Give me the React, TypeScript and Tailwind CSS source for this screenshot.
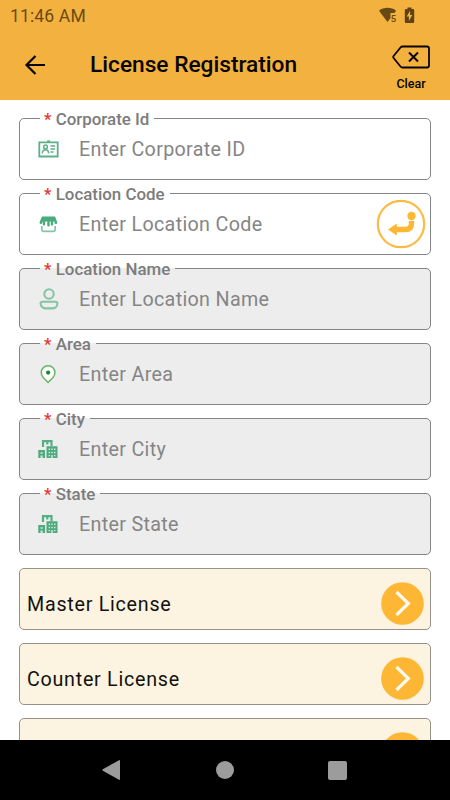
import { type ReactNode } from "react";
import clsx from "clsx";

const IdCardIcon = () => (
  <svg width="22" height="20" viewBox="0 0 22 20" fill="none" stroke="#5fb088" strokeWidth="1.8">
    <path d="M1.3 3.3h18.4v14.2H1.300z" />
    <path d="M9.200 2.200h2.800" />
    <circle cx="7.500" cy="8" r="1.9" strokeWidth="1.5" />
    <path d="M4.300 14.400c.2-2.400 1.400-3.600 3.200-3.600s3 1.200 3.200 3.600" strokeWidth="1.6" />
    <path d="M12.500 7h4.600M12.500 10h4.600M12.500 13h3" strokeWidth="1.500" />
  </svg>
);

const StoreIcon = () => (
  <svg width="22" height="20" viewBox="0 0 22 20" fill="none">
    <path d="M4 2.600h13l2.200 5.300v.8c0 .8-.6 1.300-1.400 1.300s-1.400-.6-1.400-1.400V7.400h-1.200v2.800c0 .8-.5 1.300-1.200 1.300s-1.200-.5-1.200-1.300V7.400h-1.100v3.800c0 .8-.5 1.300-1.200 1.300s-1.200-.5-1.200-1.300V7.400H7.200v2.800c0 .8-.5 1.300-1.200 1.300s-1.200-.5-1.200-1.300V7.400h-.4v1.200c0 .8-.6 1.400-1.400 1.400s-1.400-.5-1.400-1.300v-.8z" fill="#4aab7b" />
    <path d="M3.800 12v3.800c0 .9.500 1.500 1.500 1.500h10.400c1 0 1.500-.6 1.500-1.500V12" stroke="#83c5a4" strokeWidth="1.700" />
  </svg>
);

const PersonIcon = () => (
  <svg width="22" height="22" viewBox="0 0 22 22" fill="none" stroke="#85c4a4" strokeWidth="2.100">
    <circle cx="11" cy="6" r="4.700" />
    <path d="M4.600 13.800h12.800c1.200 0 2 .7 2 1.700 0 3.100-2.600 4.900-5.400 4.900H8c-2.800 0-5.400-1.800-5.400-4.900 0-1 .8-1.700 2-1.700z" />
  </svg>
);

const PinIcon = () => (
  <svg width="22" height="20" viewBox="0 0 22 20">
    <path d="M10.100 18.500 5.200 13.400C2.300 10.200 3 6 5 3.900c2.800-2.900 7.400-2.900 10.200 0 2 2.100 2.700 6.300-.2 9.500z" fill="#fff" stroke="#66b565" strokeWidth="1.500" />
    <circle cx="10.100" cy="8.600" r="2.100" fill="#168a2c" />
  </svg>
);

const BuildingsIcon = () => (
  <svg width="22" height="20" viewBox="0 0 22 20" fill="none">
    <path d="M5 8V2.200h8.500V7" stroke="#58ae83" strokeWidth="2.200" />
    <path d="M9.300 2.500v3" stroke="#58ae83" strokeWidth="2.200" />
    <path d="M.3 11H7v8H.3zM8.500 7.200h11V19h-11z" fill="#4eaa7d" />
    <path d="M2.500 13.200h2.200v1.500H2.500zM2.500 16.600h2.200V19H2.500zM10.600 9.500h1.500V11h-1.500zM13.300 9.500h1.500V11h-1.500zM16 9.500h1.500V11H16zM10.600 12.800h1.500v1.500h-1.500zM13.300 12.800h1.500v1.500h-1.500zM16 12.800h1.500v1.500H16zM10.600 16h1.500v1.300h-1.500zM13.300 16h1.500v3h-1.500zM16 16h1.500v1.300H16z" fill="#cfe5da" />
  </svg>
);

const EnterButton = () => (
  <button aria-label="Look up location code">
    <svg width="50" height="50" viewBox="0 0 50 50" fill="none">
      <circle cx="25" cy="25" r="23.200" stroke="#fdbb45" strokeWidth="2.200" />
      <circle cx="35.500" cy="17" r="4.200" fill="#fdb735" />
      <path d="M35.500 22v2.500q0 6-6 6H19" stroke="#fdb735" strokeWidth="5.400" />
      <path d="M12 30.500 20.800 24.500v12z" fill="#fdb735" />
    </svg>
  </button>
);

interface FieldProps {
  label: string;
  placeholder: string;
  icon: ReactNode;
  disabled?: boolean;
  action?: ReactNode;
}

function Field({ label, placeholder, icon, disabled, action }: FieldProps) {
  return (
    <fieldset className={clsx("h-[62px] min-w-0 rounded-[5px] border border-[#858585] pl-5", disabled && "bg-[#ededed]")}>
      <legend className="h-px whitespace-nowrap pl-1 pr-[5px] text-[16.900px] font-medium leading-[3px] text-[#7c7c7c]">
        <span className="text-[#e5352d]">*</span> {label}
      </legend>
      <div className="flex h-[60px] items-center">
        <div className="-ml-0.5 flex w-[41px] shrink-0">{icon}</div>
        <input
          className="h-10 min-w-0 flex-1 bg-transparent text-[19.700px] tracking-[0.330px] outline-none placeholder:text-[#858585]"
          placeholder={placeholder}
          disabled={disabled}
        />
        {action && <div className="mr-1 flex">{action}</div>}
      </div>
    </fieldset>
  );
}

function LicenseRow({ title }: { title: string }) {
  return (
    <button className="flex h-[62px] w-full shrink-0 items-center justify-between rounded-[5px] border border-[#96928b] bg-[#fcf3e0] pl-[7px] pr-[6px] pt-[9px] text-left text-[19.700px] tracking-[0.740px] text-[#111]">
      <span className="block pt-0.5">{title}</span>
      <svg width="43" height="43" viewBox="0 0 43 43" fill="none">
        <circle cx="21.500" cy="21.500" r="21.300" fill="#fdb735" />
        <path d="M15.500 10 27.300 21.500 15.500 33" stroke="#fffaf0" strokeWidth="3.200" />
      </svg>
    </button>
  );
}

export default function App() {
  return (
    <div className="flex h-[800px] w-[450px] flex-col overflow-hidden bg-white font-['Roboto',sans-serif]">
      {/* Status bar and app bar */}
      <header className="h-[100px] shrink-0 bg-[#f3b23f]">
        <div className="flex h-8 items-center justify-between pl-[10px] pr-[34px] text-[#6b4a12]">
          <span className="text-[17.500px] tracking-[0.150px]">11:46 AM</span>
          <div className="flex items-center pb-0.5">
            <svg width="20" height="18" viewBox="0 0 20 18" fill="#684914">
              <path d="M1 4.700C5.500.9 13.500.9 18 4.700l-1.500 2.300h-4v5L9.500 16z" />
              <text x="12.700" y="15.500" fontSize="9.500" fontWeight="500">5</text>
            </svg>
            <svg width="12" height="18" viewBox="0 0 12 18" className="ml-1.5">
              <path d="M3.500 1.500h4V3H9q1.200 0 1.200 1.200v11.500q0 1.200-1.200 1.200H2q-1.200 0-1.200-1.200V4.200Q.8 3 2 3h1.500z" fill="#5f4214" />
              <path d="M6.100 4.800v4.100h2.200l-3.400 6v-4.300H2.700z" fill="#f3b23f" />
            </svg>
          </div>
        </div>
        <div className="flex h-[66px] items-center pl-6 pr-5">
          <button aria-label="Back">
            <svg width="22" height="22" viewBox="0 0 22 22" fill="none" stroke="#090602" strokeWidth="2.200">
              <path d="M21 11H3M11.500 2 2.500 11l9 9" />
            </svg>
          </button>
          <h1 className="ml-11 flex-1 text-[22.700px] font-medium text-[#080501]">License Registration</h1>
          <button className="flex flex-col items-center pt-[7px] text-[12.500px] font-medium text-[#080501]">
            <svg width="38" height="24" viewBox="0 0 38 24" fill="none" stroke="#080501" strokeWidth="1.800">
              <path d="M10.500 1.500H35q2 0 2 2v17q0 2-2 2H10.500q-1.200 0-2-1L1.600 13q-.8-1 0-2l6.900-8.500q.8-1 2-1z" />
              <path d="m17 7.500 9 9m0-9-9 9" strokeWidth="2" />
            </svg>
            <span className="mt-[7px] leading-4">Clear</span>
          </button>
        </div>
      </header>

      <main className="flex flex-1 flex-col gap-[13px] overflow-hidden px-[19px] pt-[18px]">
        <Field label="Corporate Id" placeholder="Enter Corporate ID" icon={<IdCardIcon />} />
        <Field label="Location Code" placeholder="Enter Location Code" icon={<StoreIcon />} action={<EnterButton />} />
        <Field label="Location Name" placeholder="Enter Location Name" icon={<PersonIcon />} disabled />
        <Field label="Area" placeholder="Enter Area" icon={<PinIcon />} disabled />
        <Field label="City" placeholder="Enter City" icon={<BuildingsIcon />} disabled />
        <Field label="State" placeholder="Enter State" icon={<BuildingsIcon />} disabled />
        <LicenseRow title="Master License" />
        <LicenseRow title="Counter License" />
        <LicenseRow title="" />
      </main>

      {/* Android navigation */}
      <nav className="flex h-[60px] shrink-0 items-center justify-between bg-black pl-[101px] pr-[103px]">
        <svg width="20" height="22" viewBox="0 0 20 22" fill="#9c9c9c">
          <path d="M18 1.200q1-.5 1 .6v18.400q0 1.100-1 .6L1.800 11.700q-1-.7 0-1.400z" />
        </svg>
        <span className="ml-[1px] size-[18px] rounded-full bg-[#9c9c9c]" />
        <span className="size-[19px] rounded-[2px] bg-[#9c9c9c]" />
      </nav>
    </div>
  );
}
